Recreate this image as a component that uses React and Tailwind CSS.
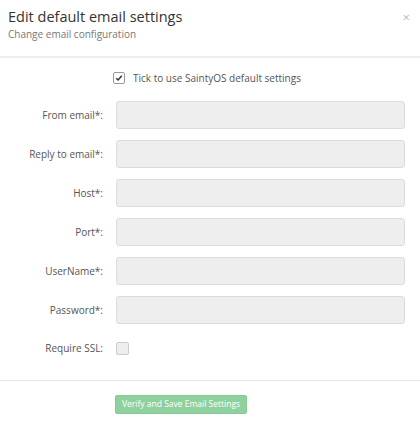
export default function App() {
  const fields = ['From email*:', 'Reply to email*:', 'Host*:', 'Port*:', 'UserName*:', 'Password*:'];

  return (
    <div className="w-[420px] h-[428px] bg-white text-[#555] font-['Open_Sans',sans-serif]">
      {/* Header */}
      <div className="flex items-start justify-between pl-2 pr-[10px] pt-[7px] h-[58px] border-b-2 border-[#eeeeee]">
        <div>
          <h2 className="text-[14.5px] leading-[20px] text-[#333]">Edit default email settings</h2>
          <p className="text-[10px] leading-[14px] text-[#777]">Change email configuration</p>
        </div>
        <button className="text-[13px] leading-none text-[#bbb] mt-[4px]">×</button>
      </div>

      {/* Body */}
      <div className="pt-[14px] pb-[24px] border-b border-[#e5e5e5]">
        <label className="flex items-center gap-[8px] pl-[113px] h-[12px]">
          <span className="w-[12px] h-[12px] rounded-[2px] border border-[#999] bg-white flex items-center justify-center">
            <svg width="8" height="8" viewBox="0 0 8 8">
              <path d="M1.2 4.2 L3.1 6 L6.8 1.8" fill="none" stroke="#333" strokeWidth="1.5" />
            </svg>
          </span>
          <span className="text-[10px] text-[#555]">Tick to use SaintyOS default settings</span>
        </label>

        <div className="flex flex-col gap-[11px] mt-[17px]">
          {fields.map((f) => (
            <div key={f} className="flex items-center">
              <div className="w-[103px] text-right text-[10px] text-[#555]">{f}</div>
              <div className="ml-[13px] w-[289px] h-[28px] rounded-[3px] border border-[#dcdcdc] bg-[#eeeeee]" />
            </div>
          ))}
          <div className="flex items-center mt-[6px]">
            <div className="w-[103px] text-right text-[10px] text-[#555]">Require SSL:</div>
            <div className="ml-[13px] w-[13px] h-[13px] rounded-[2px] border border-[#ccc] bg-[#eeeeee]" />
          </div>
        </div>
      </div>

      {/* Footer */}
      <div className="flex pl-[115px] pt-[14px]">
        <button className="h-[19px] px-[6px] rounded-[2px] bg-[#8fd19e] border border-[#86c995] text-white text-[8.5px] leading-none">
          Verify and Save Email Settings
        </button>
      </div>
    </div>
  );
}
